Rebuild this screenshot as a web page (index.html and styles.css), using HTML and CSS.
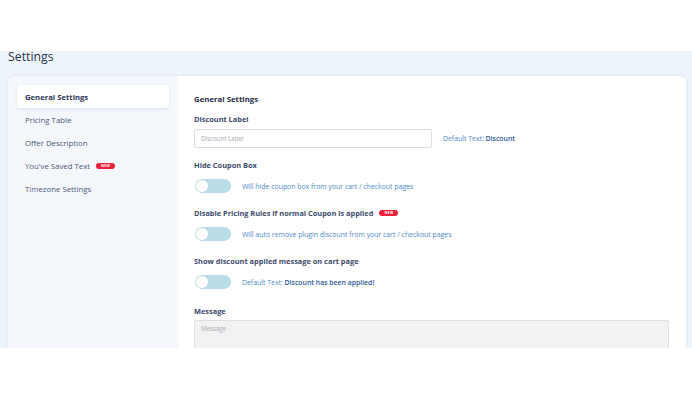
FILE: index.html
```html
<!DOCTYPE html>
<html>
<head>
<meta charset="utf-8">
<link rel="stylesheet" href="styles.css">
</head>
<body>
<div class="frame">
  <h1 class="page-title">Settings</h1>
  <div class="card">
    <nav class="sidebar">
      <div class="nav-item active">General Settings</div>
      <div class="nav-item">Pricing Table</div>
      <div class="nav-item">Offer Description</div>
      <div class="nav-item">You've Saved Text <span class="badge">NEW</span></div>
      <div class="nav-item">Timezone Settings</div>
    </nav>
    <main class="content">
      <h2 class="section-title">General Settings</h2>

      <div class="field first">
        <div class="label">Discount Label</div>
        <div class="input-row">
          <div class="input"><span class="placeholder">Discount Label</span></div>
          <div class="hint">Default Text: <b>Discount</b></div>
        </div>
      </div>

      <div class="field after-input">
        <div class="label">Hide Coupon Box</div>
        <div class="toggle-row">
          <span class="toggle"><span class="knob"></span></span>
          <span class="hint">Will hide coupon box from your cart / checkout pages</span>
        </div>
      </div>

      <div class="field">
        <div class="label">Disable Pricing Rules if normal Coupon is applied <span class="badge">NEW</span></div>
        <div class="toggle-row">
          <span class="toggle"><span class="knob"></span></span>
          <span class="hint">Will auto remove plugin discount from your cart / checkout pages</span>
        </div>
      </div>

      <div class="field">
        <div class="label">Show discount applied message on cart page</div>
        <div class="toggle-row">
          <span class="toggle"><span class="knob"></span></span>
          <span class="hint">Default Text: <b>Discount has been applied!</b></span>
        </div>
      </div>

      <div class="field msg">
        <div class="label">Message</div>
        <div class="textarea"><span class="placeholder">Message</span></div>
      </div>
    </main>
  </div>
</div>
</body>
</html>
```

FILE: styles.css
```css
* { box-sizing: border-box; }
html, body { margin: 0; padding: 0; background: #ffffff; }
body { font-family: "Open Sans", "Lato", sans-serif; }

.frame {
  margin-top: 51px;
  height: 297px;
  background: #eef4fb;
  padding: 0 6px 0 8px;
}

.page-title {
  margin: 0;
  height: 25px;
  font-size: 12.3px;
  line-height: 12px;
  font-weight: 500;
  color: #2a3447;
}

.card {
  display: grid;
  grid-template-columns: 170px 1fr;
  background: #ffffff;
  border-radius: 6px 6px 0 0;
  box-shadow: 0 0 3px rgba(40, 70, 120, 0.12);
  height: 272px;
  overflow: hidden;
}

.sidebar {
  background: #f4f8fd;
  padding: 9px 9px;
  display: flex;
  flex-direction: column;
}

.nav-item {
  height: 23px;
  display: flex;
  align-items: center;
  padding-left: 8px;
  font-size: 7.8px;
  color: #4b5877;
  font-weight: 500;
}
.nav-item.active {
  background: #ffffff;
  border-radius: 3px;
  box-shadow: 0 1px 3px rgba(60, 90, 140, 0.15);
  color: #2a3658;
  font-weight: 700;
  font-size: 7.7px;
}

.badge {
  display: inline-block;
  background: #ee1f3b;
  color: #fff;
  font-size: 3.6px;
  font-weight: 700;
  line-height: 6px;
  height: 6px;
  padding: 0 5px;
  border-radius: 3px;
  margin-left: 6px;
  letter-spacing: 0.2px;
  vertical-align: middle;
}

.content {
  padding: 17px 17px 0 16px;
}

.section-title {
  margin: 0;
  font-size: 7.8px;
  line-height: 12px;
  font-weight: 700;
  color: #1f2b4a;
}

.field { margin-top: 14px; }
.field.first { margin-top: 8px; }
.field.after-input { margin-top: 11px; }
.field.msg { margin-top: 16px; }

.label {
  font-size: 7.4px;
  line-height: 12px;
  font-weight: 700;
  color: #3c4a6b;
  display: flex;
  align-items: center;
}
.field .label .badge { margin-left: 6px; }

.input-row {
  display: flex;
  align-items: center;
  margin-top: 4px;
}
.input {
  width: 238px;
  height: 19px;
  border: 1px solid #d9dee6;
  border-radius: 2px;
  display: flex;
  align-items: center;
  padding-left: 6px;
}
.placeholder {
  font-size: 6.2px;
  color: #a4abb6;
}
.input-row .hint { margin-left: 11px; }

.hint {
  font-size: 6.9px;
  color: #5088c8;
}
.hint b { color: #2f5a9c; font-weight: 600; }

.toggle-row {
  display: flex;
  align-items: center;
  margin-top: 8px;
  padding-left: 1px;
}
.toggle {
  position: relative;
  width: 36px;
  height: 14px;
  border-radius: 7px;
  background: #b8dde6;
  margin-right: 11px;
  flex: none;
}
.knob {
  position: absolute;
  left: 1px;
  top: 1px;
  width: 12px;
  height: 12px;
  border-radius: 50%;
  background: #ffffff;
}

.textarea {
  margin-top: 3px;
  width: 475px;
  height: 40px;
  background: #f2f2f2;
  border: 1px solid #dcdfe4;
  border-radius: 2px;
  padding: 4px 6px;
}
.textarea .placeholder { line-height: 8px; display: block; }
```
